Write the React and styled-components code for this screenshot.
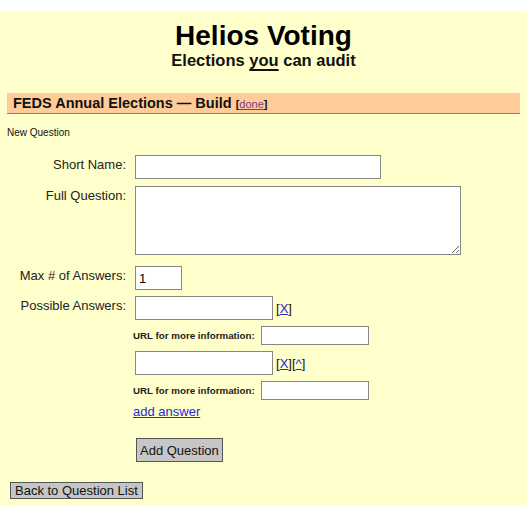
import styled, { createGlobalStyle } from 'styled-components';

const GlobalStyle = createGlobalStyle`
  html, body {
    margin: 0;
    padding: 0;
    background: #fff;
  }
  body {
    font-family: "Liberation Sans", Arial, sans-serif;
    color: #111;
  }
`;

const Page = styled.div`
  margin: 11px 3px 0 0;
  min-height: 494px;
  box-sizing: border-box;
  background: #ffffcc;
  padding: 10px 7px 0;
`;

const Banner = styled.header`
  text-align: center;
`;

const Title = styled.h1`
  margin: 0;
  font-size: 28px;
  line-height: 30px;
  font-weight: bold;
  color: #000;
`;

const Tagline = styled.h2`
  margin: 0;
  font-size: 16.5px;
  line-height: 18px;
  font-weight: bold;
  color: #111;

  u {
    text-decoration-thickness: 2px;
    text-underline-offset: 3px;
  }
`;

const ElectionBar = styled.div`
  margin-top: 24px;
  height: 20px;
  background: #ffcc99;
  border-bottom: 1px solid #9c8066;
  padding-left: 6px;
  font-size: 14.5px;
  line-height: 20px;
  font-weight: bold;
  color: #111;
`;

const DoneLink = styled.span`
  font-size: 11px;
  font-weight: bold;

  a {
    font-weight: normal;
    color: #7a3b8f;
    text-decoration: underline;
  }
`;

const SectionLabel = styled.div`
  margin-top: 13px;
  font-size: 10px;
  line-height: 12px;
  color: #111;
`;

const Form = styled.form`
  display: flex;
  flex-direction: column;
  margin-top: 16px;
`;

const FieldRow = styled.div`
  display: grid;
  grid-template-columns: 119px 1fr;
  column-gap: 7px;
  margin-top: ${(p) => p.$space || 0}px;
`;

const Label = styled.label`
  text-align: right;
  padding-top: 2px;
  font-size: 13px;
  line-height: 15px;
  color: #222;
`;

const TextInput = styled.input`
  display: block;
  box-sizing: border-box;
  margin: 0 0 0 2px;
  width: ${(p) => p.$w}px;
  height: ${(p) => p.$h || 24}px;
  border: 1px solid #868686;
  background: #fff;
  padding: 1px 3px;
  font-family: inherit;
  font-size: 13px;
  color: #000;
`;

const TextArea = styled.textarea`
  display: block;
  box-sizing: border-box;
  margin: 0 0 0 2px;
  width: 326px;
  height: 69px;
  border: 1px solid #868686;
  background: #fff;
  padding: 2px;
  font-family: inherit;
  font-size: 13px;
`;

const AnswerList = styled.div`
  display: flex;
  flex-direction: column;
  gap: 6px;
`;

const AnswerLine = styled.div`
  display: flex;
  align-items: center;
  gap: 3px;
  font-size: 13px;
  line-height: 15px;
  color: #111;

  a {
    color: #2a2ad0;
    text-decoration: underline;
  }
`;

const UrlLine = styled.div`
  display: flex;
  align-items: center;
  gap: 6px;
  font-size: 9.75px;
  font-weight: bold;
  color: #222;

  input {
    margin-left: 0;
  }
`;

const AddAnswer = styled.a`
  margin-top: -2px;
  font-size: 13px;
  line-height: 15px;
  color: #2a2ad0;
  text-decoration: underline;
  align-self: flex-start;
`;

const GrayButton = styled.button`
  display: block;
  box-sizing: border-box;
  margin: ${(p) => p.$top}px 0 0 3px;
  height: ${(p) => p.$h}px;
  padding: 0 ${(p) => p.$pad}px;
  background: #c6c6c6;
  border: 1px solid #555;
  border-radius: 0;
  font-family: inherit;
  font-size: 13px;
  line-height: 15px;
  color: #111;
  cursor: pointer;
`;

const answers = [
  { id: 1, links: ['X'] },
  { id: 2, links: ['X', '^'] },
];

export default function App() {
  return (
    <>
      <GlobalStyle />
      <Page>
        <Banner>
          <Title>Helios Voting</Title>
          <Tagline>
            Elections <u>you</u> can audit
          </Tagline>
        </Banner>

        <ElectionBar>
          FEDS Annual Elections — Build{' '}
          <DoneLink>
            [<a href="#">done</a>]
          </DoneLink>
        </ElectionBar>

        <SectionLabel>New Question</SectionLabel>

        <Form onSubmit={(e) => e.preventDefault()}>
          <FieldRow>
            <Label>Short Name:</Label>
            <TextInput $w={246} />
          </FieldRow>
          <FieldRow $space={7}>
            <Label>Full Question:</Label>
            <TextArea />
          </FieldRow>
          <FieldRow $space={11}>
            <Label>Max # of Answers:</Label>
            <TextInput $w={47} defaultValue="1" />
          </FieldRow>
          <FieldRow $space={6}>
            <Label>Possible Answers:</Label>
            <div>
              <AnswerList>
                {answers.map((a) => (
                  <AnswerList key={a.id}>
                    <AnswerLine>
                      <TextInput $w={138} />
                      <span>
                        {a.links.map((l) => (
                          <span key={l}>
                            [<a href="#">{l}</a>]
                          </span>
                        ))}
                      </span>
                    </AnswerLine>
                    <UrlLine>
                      URL for more information:
                      <TextInput $w={108} $h={19} />
                    </UrlLine>
                  </AnswerList>
                ))}
                <AddAnswer href="#">add answer</AddAnswer>
              </AnswerList>
              <GrayButton type="submit" $top={19} $h={24} $pad={3}>
                Add Question
              </GrayButton>
            </div>
          </FieldRow>
        </Form>

        <GrayButton type="button" $top={20} $h={17} $pad={4}>
          Back to Question List
        </GrayButton>
      </Page>
    </>
  );
}
